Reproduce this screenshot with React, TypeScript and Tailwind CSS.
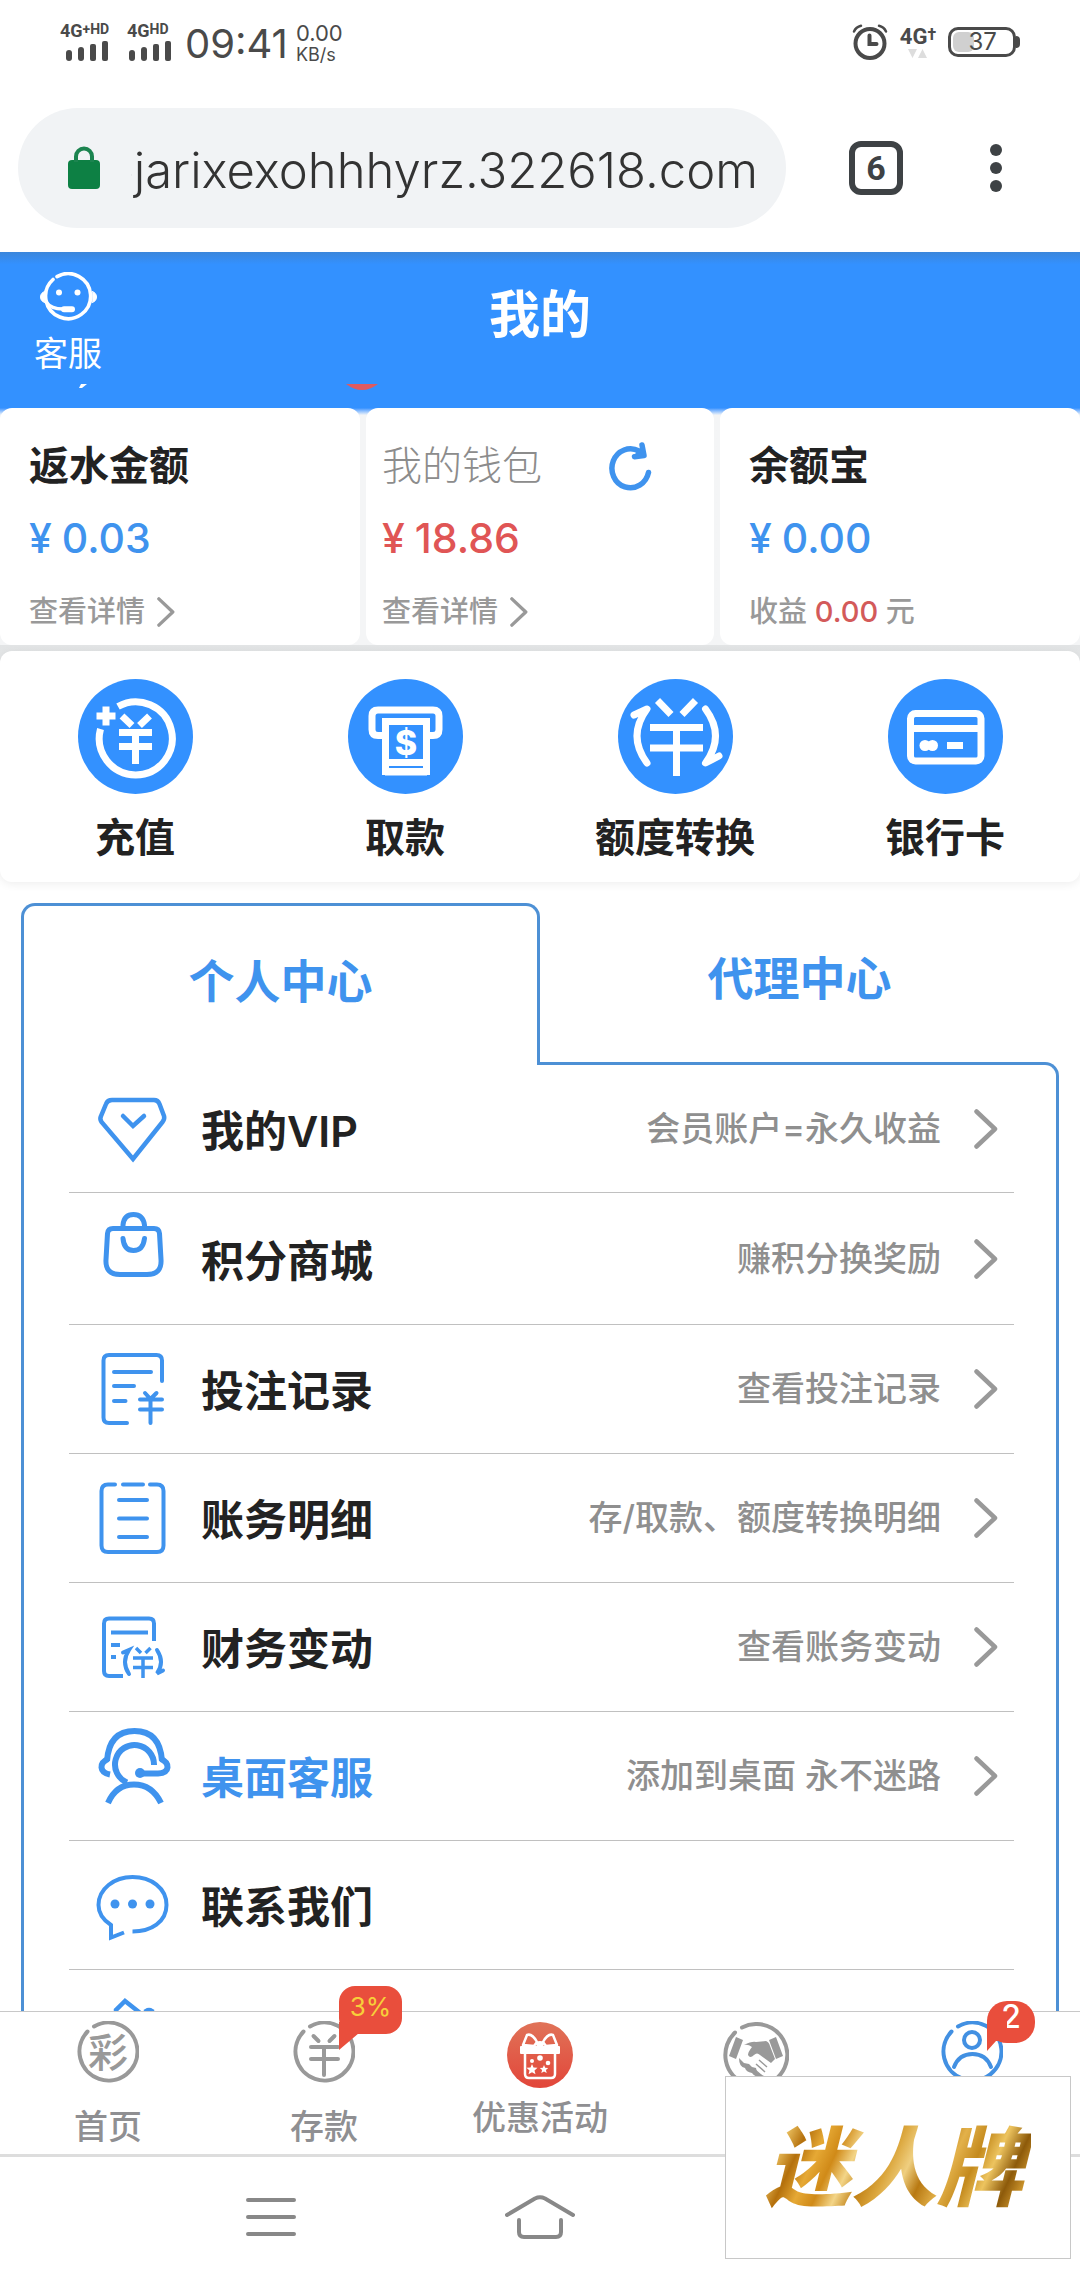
import React from "react";

const ring = "M17 5.4A29 29 0 1 1 10.5 10.5";

function SignalBars() {
  return (
    <svg className="h-5 w-[42px]" viewBox="0 0 42 20" fill="#4a4a4a">
      <rect x="0" y="9" width="6" height="11" rx="3" />
      <rect x="12" y="6" width="6" height="14" rx="3" />
      <rect x="24" y="3" width="6" height="17" rx="2" />
      <rect x="36" y="0" width="6" height="20" rx="2" />
    </svg>
  );
}

function AlarmIcon() {
  return (
    <svg className="size-9" viewBox="0 0 36 36" fill="none" stroke="#4a4a4a" strokeLinecap="round">
      <circle cx="18" cy="19.500" r="14.500" strokeWidth="4" />
      <path d="M17.500 11.500v8.500h7" strokeWidth="4" />
      <path d="M2 7.500Q4 3 9 1.800M34 7.500Q32 3 27 1.800" strokeWidth="2.500" />
    </svg>
  );
}

function LockIcon() {
  return (
    <svg className="h-11 w-8 shrink-0" viewBox="0 0 32 44" fill="none">
      <rect x="0" y="14" width="32" height="29" rx="4" fill="#0d8044" />
      <path d="M8 16v-5.500a8 8 0 0 1 16 0V16" stroke="#1c8450" strokeWidth="4" />
    </svg>
  );
}

function FaceIcon() {
  return (
    <svg className="h-[50px] w-[58px]" viewBox="0 0 58 50" fill="none" stroke="#fff" strokeLinecap="round">
      <path d="M18 4.600A22.500 22.500 0 1 1 14 7.500" strokeWidth="3.600" />
      <path d="M5.500 19.500Q1.500 21 1.500 25t4 5.500zM53.500 19.500q4 1.500 4 5.500t-4 5.500z" fill="#fff" strokeWidth="1" />
      <path d="M7 30q5 7 17 7" strokeWidth="3.500" />
      <path d="M25 37.300h8" strokeWidth="6" />
      <circle cx="20" cy="20.500" r="3" fill="#fff" stroke="none" />
      <circle cx="38.500" cy="20.500" r="3" fill="#fff" stroke="none" />
    </svg>
  );
}

function RefreshIcon() {
  return (
    <svg className="h-[50px] w-11" viewBox="0 0 44 50" fill="none" stroke="#3f93ee" strokeWidth="5.500" strokeLinecap="round" strokeLinejoin="round">
      <path d="M40.500 31.500A18.500 19.500 0 1 1 31 10" />
      <path d="M34 4l2 10.500-9.500 1.200" />
      <path d="M31 9l5 5.500-9.500 1.200z" fill="#3f93ee" strokeWidth="2" />
    </svg>
  );
}

function Chevron({ className }: { className: string }) {
  return (
    <svg className={className} viewBox="0 0 24 40" fill="none" stroke="#999" strokeWidth="4.500" strokeLinecap="round" strokeLinejoin="round">
      <path d="M2.500 2.500L21 20 2.500 37.500" />
    </svg>
  );
}

function RechargeIcon() {
  return (
    <g strokeWidth="7">
      <path d="M40 27.500A36.500 36.500 0 1 1 22.500 50" />
      <path d="M28 27.500v19M18.500 37h19M41 53.500h33M41 67.500h33M57.500 53.500V85M44 37l10 9.500M71.500 37L61.500 46.500" />
    </g>
  );
}

function WithdrawIcon() {
  return (
    <g strokeWidth="7">
      <path d="M35 56.500h-5q-6 0-6-6V37q0-6 6-6h55q6 0 6 6v13.500q0 6-6 6h-5" />
      <rect x="37.500" y="42.500" width="41" height="50" fill="#3391ff" />
      <path d="M37 83.500h42M37 93h42" />
      <text x="58" y="76" textAnchor="middle" fontSize="34" fontWeight="800" fill="#fff" stroke="none" fontFamily="Inter, sans-serif">$</text>
    </g>
  );
}

function TransferIcon() {
  return (
    <g strokeWidth="7">
      <path d="M32 48.500h53M32 69h53M58.500 48.500V97M39.500 21.500L53 35.500M77.500 21.500L64 35.500" />
      <path d="M29 84Q9 57 29 30L16 36M87.500 30q20 27 0 54l13.500-7" strokeLinecap="round" strokeLinejoin="round" />
    </g>
  );
}

function BankCardIcon() {
  return (
    <g strokeWidth="7">
      <rect x="22.500" y="34.500" width="70.500" height="47.500" rx="5" />
      <path d="M22 49.500h71M59 66.500h16" />
      <circle cx="37" cy="66.500" r="5.500" fill="#fff" stroke="none" />
      <circle cx="44.500" cy="66.500" r="5.500" fill="#fff" stroke="none" />
    </g>
  );
}

const quick = [
  { label: "充值", icon: <RechargeIcon /> },
  { label: "取款", icon: <WithdrawIcon /> },
  { label: "额度转换", icon: <TransferIcon /> },
  { label: "银行卡", icon: <BankCardIcon /> },
];

const vipIcon = (
  <g strokeWidth="4.500">
    <path d="M19 19h42q4 0 5.500 4l4.500 12q1 3-1.500 6L40 78 8.500 41Q6.500 38 8 35l5-12q1.500-4 6-4z" />
    <path d="M30 35l10 10 11-10" />
  </g>
);
const bagIcon = (
  <g strokeWidth="5">
    <path d="M20 17.500h41q5 0 5.500 5l1.500 26q1 15-14 15H27q-15 0-14-15l1.500-26q.5-5 5.500-5z" />
    <path d="M30 17v-3q1-10.500 10.500-10.500T51.500 14v3M30 27.500q1 12 10.500 12t11-12" />
  </g>
);
const recordIcon = (
  <g strokeWidth="4">
    <path d="M34 82H16q-5.500 0-5.500-5.500v-57q0-5.500 5.500-5.500h47.500q5.500 0 5.500 5.500V40" />
    <path d="M21 31h37M21 45h20M21 60h11.500M47 58.500h22M47 68.500h22M57.500 59v23M52 52l5.500 6 6-6" />
  </g>
);
const listIcon = (
  <g strokeWidth="4">
    <path d="M22 14.500h-7q-6.500 0-6.500 6.500v54.500q0 6.500 6.500 6.500h49q6.500 0 6.500-6.500V21q0-6.500-6.500-6.500h-7M30 14.500h20M26 30h28M26 48.500h28M26 67h28" />
  </g>
);
const financeIcon = (
  <g strokeWidth="4" strokeLinecap="butt">
    <path d="M30 77H16q-5 0-5-5V24.500q0-5 5-5h40q5 0 5 5V42M18 33.500h37M18 46h9M18 58h5" />
    <path d="M40 59h20M40 68.500h20M50 59v20M43 49l5 5M57.500 49l-5 5" strokeWidth="3.500" />
    <path d="M36 75q-8-12 0-24l-6 2.500M64 51q8 12 0 23.500l6-3" strokeLinecap="round" />
  </g>
);
const headsetIcon = (
  <g strokeWidth="6" strokeLinecap="butt">
    <path d="M14 33Q16 3 41.500 3T69 33" />
    <path d="M15 31q-7 3-6.500 8.500T17 46.500M68 31q7 3 6.500 8.500T65 45.500H48" />
    <path d="M61 37A19.500 19.500 0 1 0 34 54.500M15 75Q23 56.500 41 56.500T68 75" />
    <circle cx="47" cy="45" r="5" fill="#3f93ee" stroke="none" />
  </g>
);
const chatIcon = (
  <g strokeWidth="4">
    <path d="M39.500 74.500C58 74.500 73.500 65 73.500 48S58 20 39.500 20 5.500 32 5.500 48q0 12 12.500 20v12.500L31 75.500" strokeLinecap="butt" />
    <circle cx="22" cy="47" r="4.500" fill="#3f93ee" stroke="none" />
    <circle cx="39.500" cy="47" r="4.500" fill="#3f93ee" stroke="none" />
    <circle cx="57" cy="47" r="4.500" fill="#3f93ee" stroke="none" />
  </g>
);
const shareIcon = (
  <g strokeWidth="4.500">
    <path d="M32 15L23 24v14l9 9 14-10V26zM53 25q3-2 6 0v12h-6z" />
  </g>
);

const rows = [
  { name: "我的VIP", label: "我的VIP", hint: "会员账户=永久收益", icon: vipIcon, size: "h-32" },
  { name: "积分商城", label: "积分商城", hint: "赚积分换奖励", icon: bagIcon, size: "h-[132px]" },
  { name: "投注记录", label: "投注记录", hint: "查看投注记录", icon: recordIcon, size: "h-[129px]" },
  { name: "账务明细", label: "账务明细", hint: "存/取款、额度转换明细", icon: listIcon, size: "h-[129px]" },
  { name: "财务变动", label: "财务变动", hint: "查看账务变动", icon: financeIcon, size: "h-[129px]" },
  { name: "桌面客服", label: "桌面客服", hint: "添加到桌面 永不迷路", icon: headsetIcon, size: "h-[129px]", blue: true },
  { name: "联系我们", label: "联系我们", hint: "", icon: chatIcon, size: "h-[129px]" },
  { name: "分享", label: "", hint: "", icon: shareIcon, size: "h-[129px]" },
];

function WalletCard({ title, muted, amount, red, pad, children, action }: {
  title: string; muted?: boolean; amount: string; red?: boolean; pad: string; children: React.ReactNode; action?: React.ReactNode;
}) {
  return (
    <section className={`rounded-xl bg-white pt-7 pb-[13px] ${pad}`}>
      <div className="flex h-[60px] items-center justify-between">
        <h2 className={muted ? "text-[40px] leading-[60px] font-light text-[#8c8c8c]" : "text-[40px] leading-[60px] font-semibold text-[#222]"}>{title}</h2>
        {action}
      </div>
      <p className={`mt-3 flex items-center gap-2.5 text-[41px] leading-[60px] font-medium ${red ? "text-[#e05555]" : "text-[#3f93ee]"}`}>
        <span>¥</span>
        <span>{amount}</span>
      </p>
      <div className="mt-6 text-[29px] leading-10 font-medium text-[#999]">{children}</div>
    </section>
  );
}

function Detail() {
  return (
    <a href="#detail" className="flex items-center gap-3">
      查看详情
      <Chevron className="h-[30px] w-[18px]" />
    </a>
  );
}

function TabItem({ name, label, children }: { name: string; label?: string; children: React.ReactNode }) {
  return (
    <a href="#tab" aria-label={name} className="flex flex-1 flex-col items-center pt-[9px] text-[34px] leading-10 font-medium text-[#8f8f92]">
      {children}
      {label && <span>{label}</span>}
    </a>
  );
}

export default function App() {
  return (
    <div className="relative flex h-screen flex-col overflow-hidden bg-white font-['Inter','Noto_Sans_CJK_SC',sans-serif] text-[#222]">
      <header className="shrink-0">
        <div className="flex h-[88px] items-center justify-between pr-[60px] pl-[60px] text-[#4a4a4a]">
          <div className="flex items-center">
            <div className="flex w-[67px] flex-col items-start pb-1 font-['Roboto','Noto_Sans_CJK_SC',sans-serif] font-bold">
              <span className="flex items-start text-lg leading-4">4G<span className="text-sm leading-3">+HD</span></span>
              <span className="pt-0.5 pl-1.5"><SignalBars /></span>
            </div>
            <div className="flex w-[58px] flex-col items-start pb-1 font-['Roboto','Noto_Sans_CJK_SC',sans-serif] font-bold">
              <span className="flex items-start text-lg leading-4">4G<span className="text-sm leading-3">HD</span></span>
              <span className="pt-0.5 pl-0.5"><SignalBars /></span>
            </div>
            <span className="text-[40px] leading-none">09:41</span>
            <span className="ml-2 flex flex-col pb-0.5 text-[22px] leading-6">
              <span>0.00</span>
              <span className="text-lg leading-5">KB/s</span>
            </span>
          </div>
          <div className="flex items-center pb-1">
            <AlarmIcon />
            <div className="ml-3 flex flex-col items-center font-['Roboto','Noto_Sans_CJK_SC',sans-serif]">
              <span className="flex text-[22px] leading-6 font-bold">4G<span className="text-base leading-5">†</span></span>
              <svg className="h-2.5 w-5" viewBox="0 0 20 10" fill="#ddd"><path d="M0 0h9L4.500 9zM10 9h9L14.500 0z" /></svg>
            </div>
            <div className="ml-3 flex items-center">
              <div className="flex h-[30px] w-[68px] items-center rounded-[10px] border-[3px] border-[#4a4a4a] p-0.5">
                <span className="h-full w-[37%] rounded-md bg-[#d0d0d0]" />
                <span className="-ml-1.5 text-2xl leading-none">37</span>
              </div>
              <span className="h-3 w-1 rounded-r-full bg-[#4a4a4a]" />
            </div>
          </div>
        </div>
        <div className="flex items-center pt-5 pr-[72px] pb-6 pl-[18px]">
          <div className="flex h-[120px] min-w-0 flex-1 items-center rounded-full bg-[#f1f3f5] pr-7 pl-[50px]">
            <LockIcon />
            <input
              aria-label="网址"
              dir="rtl"
              readOnly
              value="cejarixexohhhyrz.322618.com"
              className="ml-[31px] h-20 w-0 min-w-0 flex-1 bg-transparent pt-1 text-[49px] font-light text-[#333] outline-none"
            />
          </div>
          <button aria-label="标签页" className="ml-[63px] flex size-[54px] shrink-0 items-center justify-center rounded-xl border-[6px] border-[#3e4245] text-[34px] leading-none font-bold text-[#3e4245]">
            <span className="font-['Roboto',sans-serif]">6</span>
          </button>
          <button aria-label="更多" className="ml-[81px] shrink-0">
            <svg className="h-12 w-6" viewBox="0 0 24 48" fill="#3e4245"><circle cx="12" cy="6" r="6" /><circle cx="12" cy="24" r="6" /><circle cx="12" cy="42" r="6" /></svg>
          </button>
        </div>
      </header>

      <main className="min-h-0 flex-1 overflow-y-auto [scrollbar-width:none]">
        <div className="relative flex h-[156px] justify-center bg-[#3391ff] bg-linear-to-b from-[#3b86db] via-[#3391ff] via-8% to-[#3391ff]">
          <button className="absolute top-5 left-[34px] flex flex-col items-center gap-3.5 text-[34px] leading-9 text-white">
            <FaceIcon />
            <span>客服</span>
          </button>
          <h1 className="pt-[29px] text-[51px] leading-[68px] font-bold text-white">我的</h1>
          <svg className="absolute top-[132px] left-[79px] h-1.5 w-2" viewBox="0 0 8 6" fill="#fff"><path d="M2 0h6L3 4H0z" /></svg>
          <svg className="absolute top-[132px] left-[346px] h-1.5 w-8" viewBox="0 0 32 6" fill="#e05a60"><path d="M0 0h32Q24 6 16 6T0 0z" /></svg>
        </div>
        <div className="bg-[#f4f5f6] bg-linear-to-b from-[#3391ff] to-[#f4f5f6] to-3%">
          <div className="grid grid-cols-[360fr_348fr_360fr] gap-1.5">
            <WalletCard title="返水金额" amount="0.03" pad="pl-[29px]"><Detail /></WalletCard>
            <WalletCard title="我的钱包" muted amount="18.86" red pad="pl-4 pr-[62px]" action={<button aria-label="刷新"><RefreshIcon /></button>}><Detail /></WalletCard>
            <WalletCard title="余额宝" amount="0.00" pad="pl-[29px]">收益 <span className="text-[#d35a5a]">0.00</span> 元</WalletCard>
          </div>
        </div>
        <div className="bg-linear-to-b from-[#e2e4e5] to-white pt-1.5">
          <nav className="grid grid-cols-4 rounded-xl bg-white pt-7 pb-4 shadow-[0_2px_10px_rgba(0,0,0,0.07)]">
            {quick.map((q) => (
              <a key={q.label} href="#quick" className="flex flex-col items-center gap-4 text-[40px] leading-[56px] font-semibold">
                <span className="size-[115px] rounded-full bg-[#3391ff]">
                  <svg className="size-full" viewBox="0 0 115 115" fill="none" stroke="#fff">{q.icon}</svg>
                </span>
                {q.label}
              </a>
            ))}
          </nav>
        </div>

        <div className="mx-[21px] mt-[21px]">
          <div className="grid h-[162px] grid-cols-2 text-[46px] font-semibold text-[#3f93ee]">
            <button className="relative z-10 rounded-t-[14px] border-x-[3px] border-t-[3px] border-[#4d90d5] bg-white pb-2">个人中心</button>
            <button className="pb-3">代理中心</button>
          </div>
          <ul className="-mt-[3px] rounded-tr-[14px] border-x-[3px] border-t-[3px] border-[#4d90d5] pr-[42px] pl-[45px]">
            {rows.map((r) => (
              <li key={r.name} className={`border-b border-[#c0c0c0] ${r.size}`}>
                <a href="#row" aria-label={r.name} className="flex h-full items-center pr-4 pl-6">
                  <svg className="h-24 w-20 shrink-0" viewBox="0 0 80 96" fill="none" stroke="#3f93ee" strokeLinecap="round">{r.icon}</svg>
                  <span className={`ml-7 flex-1 pt-1 text-[43px] leading-[60px] font-semibold ${r.blue ? "text-[#3f93ee]" : "text-[#222]"}`}>{r.label}</span>
                  {r.hint && <span className="text-[34px] leading-[50px] font-medium text-[#8f8f8f]">{r.hint}</span>}
                  {r.hint && <Chevron className="ml-[33px] h-10 w-6" />}
                </a>
              </li>
            ))}
          </ul>
        </div>
      </main>

      <footer className="relative z-20 shrink-0">
        <nav className="flex h-[146px] border-t border-b-[3px] border-t-[#c8c8c8] border-b-[#ddd] bg-white">
          <TabItem name="首页" label="首页">
            <svg className="mb-6 size-[62px]" viewBox="0 0 62 62" fill="none" stroke="#999" strokeWidth="4" strokeLinecap="round">
              <path d={ring} />
              <text x="31" y="46" textAnchor="middle" fontSize="40" fontWeight="500" fill="#999" stroke="none" fontFamily="Noto Sans CJK SC, sans-serif">彩</text>
            </svg>
          </TabItem>
          <TabItem name="存款" label="存款">
            <span className="relative mb-6">
              <svg className="size-[62px]" viewBox="0 0 62 62" fill="none" stroke="#999" strokeWidth="4" strokeLinecap="round">
                <path d={ring} />
                <path d="M18 26h27M18 38h27M31 26v28M20.500 15l5 5M41.500 15l-5 5" />
              </svg>
              <span className="absolute -top-[35px] left-[46px] h-12 w-[63px] rounded-2xl bg-[#e94e3c] text-center text-[26px] leading-[42px] font-normal text-[#f7cf3a]">
                3%
                <svg className="absolute top-9 left-0 h-[30px] w-5" viewBox="0 0 20 30" fill="#e94e3c"><path d="M0 0h20v11L0 28z" /></svg>
              </span>
            </span>
          </TabItem>
          <TabItem name="优惠活动" label="优惠活动">
            <svg className="mt-px mb-2.5 size-[66px]" viewBox="0 0 66 66" fill="none" stroke="#fff" strokeWidth="2.500">
              <defs>
                <linearGradient id="gift" x1="0" y1="0" x2="0" y2="1"><stop offset="0" stopColor="#e07358" /><stop offset="1" stopColor="#e2463a" /></linearGradient>
              </defs>
              <circle cx="33" cy="33" r="33" fill="url(#gift)" stroke="none" />
              <path d="M30 20q-5-9-10-7l-4 10 11 1zM36 20q5-9 10-7l4 10-11 1z" strokeLinejoin="round" />
              <ellipse cx="33" cy="22" rx="4" ry="3" fill="#fff" stroke="none" />
              <rect x="13" y="24" width="40" height="8" rx="1" fill="#fff" stroke="none" />
              <path d="M18 32v20q0 4 4 4h22q4 0 4-4V32" />
              <g fill="#fff" stroke="none">
                <path d="M25 42l1.500 3.500 4 .3-3 2.600 1 3.800-3.500-2-3.500 2 1-3.800-3-2.600 4-.3z" />
                <path d="M37 43l1.200 2.800 3 .2-2.300 2 .8 3-2.700-1.600-2.700 1.600.8-3-2.300-2 3-.2z" />
                <circle cx="33" cy="36" r="2.800" /><circle cx="25" cy="39" r="2" /><circle cx="41" cy="41" r="2.300" />
              </g>
            </svg>
          </TabItem>
          <TabItem name="合作">
            <svg className="mt-px size-[66px]" viewBox="0 0 66 66" fill="#999">
              <path d="M19 5.500A31 31 0 1 1 12 10.500" fill="none" stroke="#999" strokeWidth="4" strokeLinecap="round" />
              <path d="M13 15l7 3-7 19-7-3zM53 15l-7 3 7 19 7-3z" />
              <path d="M21 23q8-4 12-3l10-1q3 1 4 5l5 13-4 4-11-8q-3-3-6 0-4 4-6 0 0-3 4-8-4-3-8-2z" />
              <path d="M16 36l5 5 5 1 3 3 4 1 1 4 5 3 4 2-6 1q-6-2-8-5-6-1-7-5-6-1-6-10z" />
              <path d="M36 38l8 7M33 42l9 8M31 47l8 7" stroke="#999" strokeWidth="1.500" />
            </svg>
          </TabItem>
          <TabItem name="我的">
            <span className="relative">
              <svg className="size-[62px]" viewBox="0 0 62 62" fill="none" stroke="#4290e2" strokeWidth="4" strokeLinecap="round">
                <path d={ring} />
                <circle cx="31" cy="19" r="8" />
                <path d="M13 46q5-13 18.500-13T50 46" />
              </svg>
              <span className="absolute -top-5 left-[46px] h-[42px] w-12 rounded-[20px] bg-[#e94e3c] text-center text-[32px] leading-8 text-white">
                2
                <svg className="absolute top-5 left-0 h-[30px] w-5" viewBox="0 0 20 30" fill="#e94e3c"><path d="M0 0h20v20L9 20 0 30z" /></svg>
              </span>
            </span>
          </TabItem>
        </nav>
        <div className="flex h-[123px] items-center bg-white px-[136px] pb-1">
          <div className="grid flex-1 grid-cols-3 justify-items-center">
            <button aria-label="菜单">
              <svg className="h-11 w-[50px]" viewBox="0 0 50 44" stroke="#888" strokeWidth="4" strokeLinecap="round"><path d="M2 5h46M2 22h46M2 39h46" /></svg>
            </button>
            <button aria-label="主页">
              <svg className="h-11 w-[70px]" viewBox="0 0 70 44" fill="none" stroke="#888" strokeWidth="4" strokeLinecap="round" strokeLinejoin="round">
                <path d="M2 20L30 3.500q5-2.500 10 0L68 20M14 25v12q0 5 5 5h32q5 0 5-5V25" />
              </svg>
            </button>
            <button aria-label="返回">
              <svg className="h-11 w-[50px]" viewBox="0 0 50 44" fill="none" stroke="#888" strokeWidth="4" strokeLinecap="round"><path d="M15 8L3 20h34q10 0 10 10t-10 10H20" /></svg>
            </button>
          </div>
        </div>
        <div className="absolute right-[9px] bottom-[21px] flex h-[183px] w-[346px] items-center justify-center border border-[#c8c8c8] bg-white pr-2">
          <span className="bg-[linear-gradient(115deg,#b07410_0%,#d99a26_6%,#e9bd5c_12%,#b4700c_18%,#e6a935_24%,#d08a18_30%,#f3d588_36%,#c08015_42%,#dba63c_48%,#efcf80_54%,#b87912_60%,#e3b14a_67%,#c48a1d_74%,#edc45f_80%,#8d5a0a_87%,#d29a30_93%,#a06a12_100%)] bg-clip-text px-2 text-[86px] leading-[110px] font-black text-transparent italic">迷人牌</span>
        </div>
      </footer>
    </div>
  );
}
